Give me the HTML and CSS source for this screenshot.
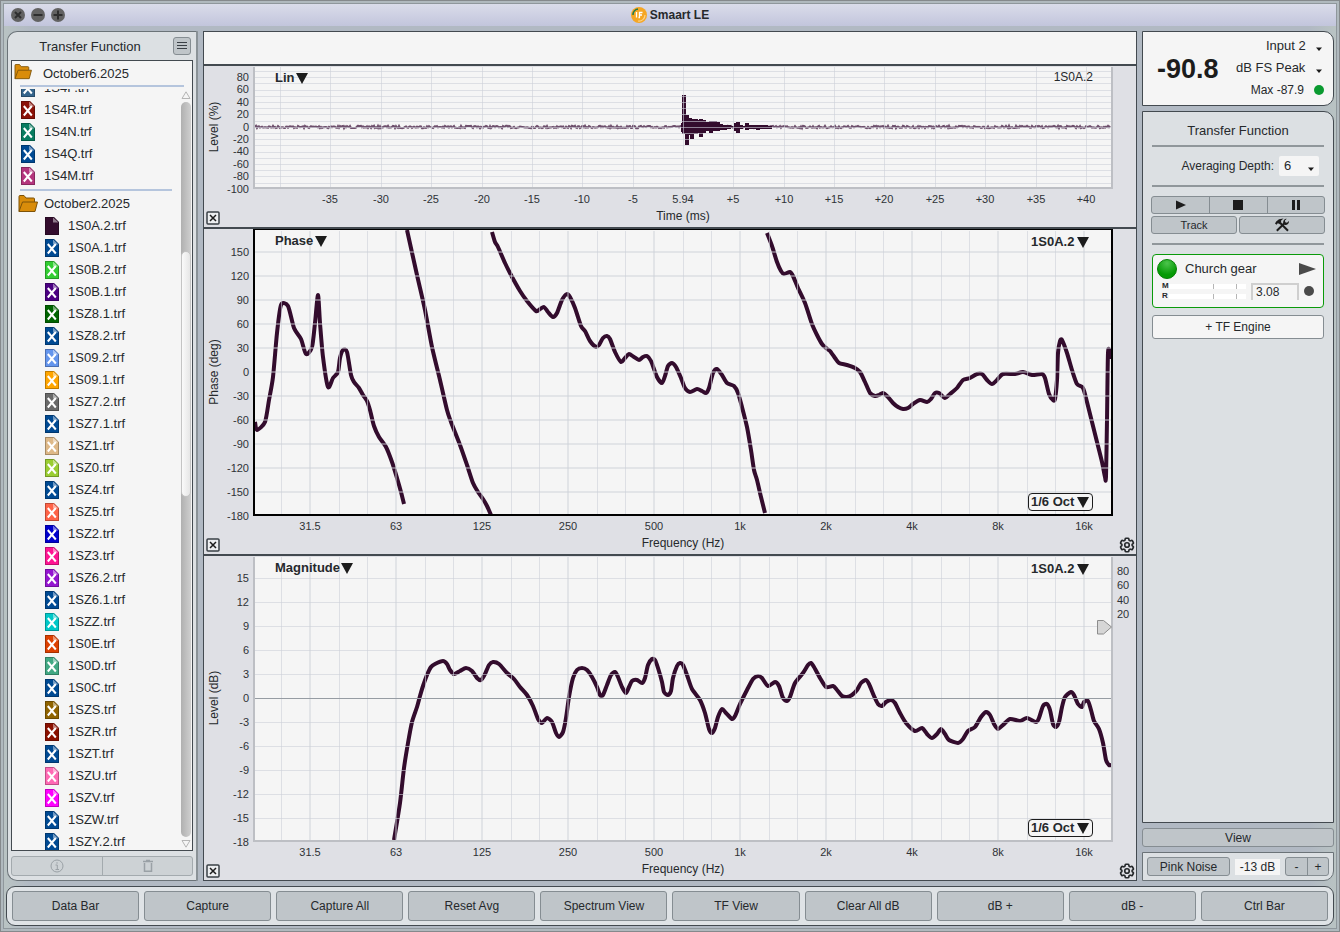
FILE: index.html
```html
<!DOCTYPE html>
<html lang="en">
<head>
    <meta charset="UTF-8">
    <meta name="viewport" content="width=device-width, initial-scale=1.0">
    <title>Smaart LE</title>
    <link rel="stylesheet" href="styles.css">
</head>
<body>
    <!-- shared icons -->
    <svg class="defs" aria-hidden="true">
        <symbol id="i-file" viewBox="0 0 14 18">
            <path d="M0 0h9l5 5v13H0z" fill="currentColor"/>
            <path d="M.5 .5h8.3l4.700 4.700v12.300H.5z" fill="none" stroke="#000" stroke-opacity=".25"/>
            <path d="M8 .5v5h5.500z" fill="#fff" fill-opacity=".45"/>
        </symbol>
        <symbol id="i-cross" viewBox="0 0 14 18">
            <path d="M2.800 5l8 9.500M10.800 5l-8 9.500" stroke="#fff" stroke-width="2"/>
        </symbol>
        <symbol id="i-folder" viewBox="0 0 20 18">
            <path d="M1 16.500V1.500q0-1 1-1h4l2 2.500h7.500q1 0 1 1V7" fill="#d98c0a" stroke="#7d5208"/>
            <path d="M1 16.500L4.500 7h15l-2.500 9.500z" fill="#d98c0a" stroke="#7d5208" stroke-linejoin="round"/>
        </symbol>
        <symbol id="i-down" viewBox="0 0 12 11">
            <path d="M0 0h12L6 11z" fill="#1c1c1c"/>
        </symbol>
        <symbol id="i-caret" viewBox="0 0 6 4">
            <path d="M0 0.500h6L3 4z" fill="#1c1c1c"/>
        </symbol>
        <symbol id="i-close" viewBox="0 0 14 14">
            <rect x="1" y="1" width="12" height="12" rx="1" fill="#eceef0" stroke="#3a4046" stroke-width="1.500"/>
            <path d="M4 4l6 6M10 4l-6 6" stroke="#1c1c1c" stroke-width="1.500"/>
        </symbol>
        <symbol id="i-gear" viewBox="0 0 24 24">
            <g fill="none" stroke="#26292c" stroke-width="2.200">
                <path d="M9.594 3.940c.09-.542.56-.94 1.110-.94h2.593c.55 0 1.020.398 1.110.94l.213 1.281c.063.374.313.686.645.87.074.04.147.083.22.127.325.196.72.257 1.075.124l1.217-.456a1.125 1.125 0 0 1 1.370.49l1.296 2.247a1.125 1.125 0 0 1-.26 1.431l-1.003.827c-.293.241-.438.613-.43.992a7.723 7.723 0 0 1 0 .255c-.008.378.137.75.43.991l1.004.827c.424.35.534.955.26 1.430l-1.298 2.247a1.125 1.125 0 0 1-1.369.491l-1.217-.456c-.355-.133-.75-.072-1.076.124a6.470 6.470 0 0 1-.22.128c-.331.183-.581.495-.644.869l-.213 1.281c-.09.543-.56.94-1.110.94h-2.594c-.55 0-1.019-.398-1.110-.94l-.213-1.281c-.062-.374-.312-.686-.644-.87a6.520 6.520 0 0 1-.22-.127c-.325-.196-.72-.257-1.076-.124l-1.217.456a1.125 1.125 0 0 1-1.369-.49l-1.297-2.247a1.125 1.125 0 0 1 .26-1.431l1.004-.827c.292-.24.437-.613.43-.991a6.932 6.932 0 0 1 0-.255c.007-.38-.138-.751-.43-.992l-1.004-.827a1.125 1.125 0 0 1-.26-1.430l1.297-2.247a1.125 1.125 0 0 1 1.370-.491l1.216.456c.356.133.751.072 1.076-.124.072-.044.146-.086.22-.128.332-.183.582-.495.644-.869l.214-1.280z"/>
                <circle cx="12" cy="12" r="3"/>
            </g>
        </symbol>
    </svg>

    <div class="window">
        <div class="frame">
            <header class="titlebar">
                <div class="lights">
                    <button aria-label="Close"><svg viewBox="0 0 14 14"><circle cx="7" cy="7" r="7" fill="#626262"/><path d="M4 4l6 6M10 4l-6 6" stroke="#2e2e2e" stroke-width="2"/></svg></button>
                    <button aria-label="Minimize"><svg viewBox="0 0 14 14"><circle cx="7" cy="7" r="7" fill="#626262"/><path d="M2.500 7h9" stroke="#2e2e2e" stroke-width="2"/></svg></button>
                    <button aria-label="Zoom"><svg viewBox="0 0 14 14"><circle cx="7" cy="7" r="7" fill="#626262"/><path d="M2.500 7h9M7 2.500v9" stroke="#2e2e2e" stroke-width="2"/></svg></button>
                </div>
                <h1>
                    <svg class="logo" viewBox="0 0 16 16">
                        <circle cx="8" cy="8" r="8" fill="#f5a623"/>
                        <path d="M2 8a6 6 0 0 1 5-6" fill="none" stroke="#1c7a50" stroke-width="1.500"/>
                        <path d="M14 8a6 6 0 0 1-7 6" fill="none" stroke="#fbd38a" stroke-width="1.200"/>
                        <path d="M5.500 5v5.500M7.500 10.500h1.500M8.500 10.500V5.500h3M8.500 8h2.500" fill="none" stroke="#fff" stroke-width="1.300"/>
                    </svg>
                    Smaart LE
                </h1>
            </header>

            <main class="body">
                <aside class="databar">
                    <div class="databar-head">
                        <h2>Transfer Function</h2>
                        <button class="menu" aria-label="Menu"><svg viewBox="0 0 18 18"><path d="M4 5.500h10M4 8.500h10M4 11.500h10" stroke="#3a4046" stroke-width="1.200"/></svg></button>
                    </div>
                    <div class="files">
                        <div class="session">
                            <svg class="folder"><use href="#i-folder"/></svg>October6.2025
                        </div>
                        <div class="pane">
                            <ul id="files"></ul>
                            <div class="scroll">
                                <svg viewBox="0 0 10 8"><path d="M1 7.500L5 .8l4 6.700z" fill="#f5f5f5" stroke="#b5b5b5"/></svg>
                                <div class="track"><span class="thumb"></span></div>
                                <svg viewBox="0 0 10 8"><path d="M1 .5h8L5 7.200z" fill="#f5f5f5" stroke="#b5b5b5"/></svg>
                            </div>
                        </div>
                    </div>
                    <div class="pair">
                        <button aria-label="Info"><svg viewBox="0 0 14 14" fill="none" stroke="#9aa1a6"><circle cx="7" cy="7" r="6"/><path d="M5.500 6h1.800v4.500M5.500 10.500h3.500M7 3.200v1.500"/></svg></button>
                        <button aria-label="Delete"><svg viewBox="0 0 14 14" fill="none" stroke="#9aa1a6" stroke-width="1.500"><path d="M3.500 4v8.200h7V4M2 2.500h10M5 1.500h4"/></svg></button>
                    </div>
                </aside>

                <section class="plots">
                    <div class="blank"></div>
                    <div class="chart chart-ir">
                        <svg class="plot" id="ir" viewBox="204 66 932 161"></svg>
                        <label class="pick pick-left"><select aria-label="Impulse scale"><option>Lin</option></select><svg><use href="#i-down"/></svg></label>
                        <button class="shut" aria-label="Close plot"><svg><use href="#i-close"/></svg></button>
                    </div>
                    <div class="chart chart-phase">
                        <svg class="plot" id="phase" viewBox="204 229 932 325"></svg>
                        <label class="pick pick-left"><select aria-label="Plot type"><option>Phase</option></select><svg><use href="#i-down"/></svg></label>
                        <label class="pick pick-right"><select aria-label="Trace"><option>1S0A.2</option></select><svg><use href="#i-down"/></svg></label>
                        <label class="pick pick-oct"><select aria-label="Smoothing"><option>1/6 Oct</option></select><svg><use href="#i-down"/></svg></label>
                        <button class="shut" aria-label="Close plot"><svg><use href="#i-close"/></svg></button>
                        <button class="gear" aria-label="Settings"><svg><use href="#i-gear"/></svg></button>
                    </div>
                    <div class="chart chart-mag">
                        <svg class="plot" id="mag" viewBox="204 556 932 324"></svg>
                        <label class="pick pick-left"><select aria-label="Plot type"><option>Magnitude</option></select><svg><use href="#i-down"/></svg></label>
                        <label class="pick pick-right"><select aria-label="Trace"><option>1S0A.2</option></select><svg><use href="#i-down"/></svg></label>
                        <label class="pick pick-oct"><select aria-label="Smoothing"><option>1/6 Oct</option></select><svg><use href="#i-down"/></svg></label>
                        <button class="shut" aria-label="Close plot"><svg><use href="#i-close"/></svg></button>
                        <button class="gear" aria-label="Settings"><svg><use href="#i-gear"/></svg></button>
                    </div>
                </section>

                <aside class="ctrlbar">
                    <div class="level">
                        <strong>-90.8</strong>
                        <div class="level-rows">
                            <label><select aria-label="Input"><option>Input 2</option></select><svg class="caret"><use href="#i-caret"/></svg></label>
                            <label><select aria-label="Meter"><option>dB FS Peak</option></select><svg class="caret"><use href="#i-caret"/></svg></label>
                            <p>Max -87.9<i class="dot"></i></p>
                        </div>
                    </div>

                    <div class="tf">
                        <h2>Transfer Function</h2>
                        <hr>
                        <div class="depth">
                            <label for="depth">Averaging Depth:</label>
                            <span class="depth-box"><select id="depth"><option>6</option></select><svg class="caret"><use href="#i-caret"/></svg></span>
                        </div>
                        <hr>
                        <div class="transport">
                            <button aria-label="Play"><svg viewBox="0 0 10 10"><path d="M0 0.500l10 4.500-10 4.500z"/></svg></button>
                            <button aria-label="Stop"><svg viewBox="0 0 10 10"><path d="M0 0h10v10H0z"/></svg></button>
                            <button aria-label="Pause"><svg viewBox="0 0 10 10"><path d="M1 0h3v10H1zM6 0h3v10H6z"/></svg></button>
                        </div>
                        <div class="tools">
                            <button class="btn">Track</button>
                            <button class="btn" aria-label="Tools"><svg viewBox="0 0 14 14">
                                <path d="M0 5.500l1.200-2L4 1.200 8.500.6 6 2.800l.2 1.400-2 2-1.200-1.200-1.500 1.700z"/>
                                <path d="M5 4.700l8 8M1.800 12.800L10 4.800" fill="none" stroke="#1c1c1c" stroke-width="2"/>
                                <path d="M11.800 .8a3.400 3.400 0 0 0-3.300 4.800l1.400 1.300a3.400 3.400 0 0 0 4-3.900l-1.900 1.700-1.700-.4-.4-1.700z"/>
                            </svg></button>
                        </div>
                        <hr>
                        <div class="engine">
                            <div class="engine-head">
                                <svg class="led" viewBox="0 0 20 20">
                                    <defs><radialGradient id="led" cx=".5" cy=".2" r=".6"><stop offset="0" stop-color="#4cc44c"/><stop offset="1" stop-color="#059a05"/></radialGradient></defs>
                                    <circle cx="10" cy="10" r="9.500" fill="url(#led)" stroke="#078007"/>
                                </svg>
                                <span>Church gear</span>
                                <button aria-label="Start"><svg viewBox="0 0 17 12"><path d="M0 0l17 6-17 6z" fill="#4a4a4a"/></svg></button>
                            </div>
                            <div class="engine-body">
                                <div class="meters">
                                    <b>M</b><span class="meter"><i></i><i></i></span>
                                    <b>R</b><span class="meter"><i></i><i></i></span>
                                </div>
                                <input type="text" value="3.08" aria-label="Delay (ms)">
                                <i class="rec"></i>
                            </div>
                        </div>
                        <button class="add">+ TF Engine</button>
                    </div>

                    <button class="btn view">View</button>

                    <div class="noise">
                        <button class="btn">Pink Noise</button>
                        <output>-13 dB</output>
                        <div class="step"><button>-</button><button>+</button></div>
                    </div>
                </aside>
            </main>

            <footer class="toolbar">
                <button class="btn">Data Bar</button>
                <button class="btn">Capture</button>
                <button class="btn">Capture All</button>
                <button class="btn">Reset Avg</button>
                <button class="btn">Spectrum View</button>
                <button class="btn">TF View</button>
                <button class="btn">Clear All dB</button>
                <button class="btn">dB +</button>
                <button class="btn">dB -</button>
                <button class="btn">Ctrl Bar</button>
            </footer>
        </div>
    </div>
    <script src="main.js"></script>
</body>
</html>
```

FILE: styles.css
```css
*{
    box-sizing: border-box;
    padding: 0;
    margin: 0;
}
body{
    font: 12px/16px "Liberation Sans", Arial, sans-serif;
    color: #26292c;
}
ul{
    list-style: none;
}
button, select, input{
    font: inherit;
    color: inherit;
    border: 0;
    background: none;
    appearance: none;
}
button{
    display: flex;
    align-items: center;
    justify-content: center;
}
h2{
    font-size: 13px;
    font-weight: normal;
    text-align: center;
}
svg{
    display: block;
    flex: none;
}
.defs{
    position: absolute;
    width: 0;
    height: 0;
}

/* window */
.window{
    height: 100vh;
    min-height: 700px;
    padding: 2px;
    border: 1px solid #85898c;
    background: #b0b9be;
}
.frame{
    display: flex;
    flex-direction: column;
    height: 100%;
    border: 1px solid #8f979c;
    background: linear-gradient(90deg, #b9c3c3, #b1b9c3 2%, #b1b9c3 98%, #b9c3c3);
}
.titlebar{
    display: grid;
    grid-template-columns: 1fr auto 1fr;
    align-items: center;
    height: 22px;
    padding: 0 7px;
    background: linear-gradient(#dadcea, #c2c5dc);
}
.lights{
    display: flex;
    gap: 6px;
}
.lights svg{
    width: 14px;
    height: 14px;
}
.titlebar h1{
    display: flex;
    align-items: center;
    gap: 3px;
    font-size: 12px;
}
.logo{
    width: 16px;
    height: 16px;
}
.body{
    flex: 1;
    min-height: 0;
    display: grid;
    grid-template-columns: 191px minmax(0, 1fr) 192px;
    grid-template-rows: minmax(0, 1fr);
    gap: 5px;
    padding: 5px 2px 5px 3px;
}

/* buttons */
.btn{
    border: 1px solid #858d92;
    border-radius: 3px;
    background: #bfc5c9;
}
.toolbar{
    display: grid;
    grid-template-columns: repeat(10, minmax(0, 1fr));
    gap: 5px;
    height: 40px;
    margin: 0 2px 2px;
    padding: 4px 5px;
    border: 1px solid #434a50;
    border-radius: 9px;
    background: #dfe3e6;
}

/* data bar */
.databar{
    display: flex;
    flex-direction: column;
    padding: 0 3px 4px;
    border: 1px solid #6b7378;
    border-right: 2px solid #8a9297;
    border-radius: 10px 0 0 10px;
    background: #dce0e3;
}
.databar-head{
    display: grid;
    grid-template-columns: 1fr 18px;
    align-items: center;
    height: 28px;
    padding-right: 2px;
}
.databar-head h2{
    padding: 2px 4px 0 0;
}
.menu{
    height: 18px;
    border: 1px solid #858d92;
    border-radius: 3px;
    background: #bfc5c9;
}
.menu svg{
    width: 18px;
    height: 18px;
}
.files{
    flex: 1;
    min-height: 0;
    display: flex;
    flex-direction: column;
    border: 1px solid #434a50;
    background: #f5f5f5;
    font-size: 13px;
}
.session{
    display: flex;
    align-items: center;
    gap: 11px;
    height: 26px;
    margin: 0 8px 2px;
    padding-top: 2px;
    border-bottom: 2px solid #b5c5dd;
}
.folder{
    width: 20px;
    height: 18px;
}
.session .folder{
    width: 18px;
    height: 16px;
    margin: 0 0 4px -6px;
}
.pane{
    flex: 1;
    min-height: 0;
    display: flex;
    overflow: hidden;
}
/* list is scrolled half a row */
#files{
    flex: 1;
    margin-top: -12px;
}
#files li{
    display: flex;
    align-items: center;
    gap: 9px;
    height: 22px;
    padding-left: 33px;
}
#files .top{
    padding-left: 9px;
}
#files .group{
    gap: 6px;
    padding-left: 6px;
}
#files .rule{
    height: 2px;
    margin: 2px 8px;
    background: #b5c5dd;
}
.file{
    width: 14px;
    height: 18px;
}
.scroll{
    display: flex;
    flex-direction: column;
    align-items: center;
    gap: 3px;
    width: 12px;
    padding: 2px 1px;
}
.scroll svg{
    width: 10px;
    height: 8px;
}
.track{
    flex: 1;
    display: grid;
    grid-template-rows: 149fr 246fr 340fr;
    width: 10px;
    border-radius: 5px;
    background: linear-gradient(90deg, #b0b0b0, #cfcfcf);
    overflow: hidden;
}
.thumb{
    grid-row: 2;
    border: 1px solid #c4c4c4;
    border-radius: 5px;
    background: linear-gradient(90deg, #fafafa, #e6e6e6);
}
.pair{
    display: grid;
    grid-template-columns: 1fr 1fr;
    height: 20px;
    margin-top: 5px;
    border: 1px solid #a3aaae;
    border-radius: 3px;
    background: #cdd2d5;
}
.pair button + button{
    border-left: 1px solid #a3aaae;
}
.pair svg{
    width: 14px;
    height: 14px;
}

/* plots */
.plots{
    display: flex;
    flex-direction: column;
    border: 1px solid #434a50;
    background: #dfe0e5;
}
.blank{
    flex: none;
    height: 34px;
    border-bottom: 2px solid #434a50;
    background: #f5f5f5;
}
.chart{
    position: relative;
    min-height: 0;
    border-bottom: 2px solid #434a50;
}
.chart-ir{
    flex: 161 1 0;
}
.chart-phase{
    flex: 325 1 0;
}
.chart-mag{
    flex: 324 1 0;
    border-bottom: 0;
}
.plot{
    width: 100%;
    height: 100%;
}
.paper{
    fill: #f5f5f5;
}
.edge{
    fill: none;
    stroke: #bdbfc4;
    stroke-width: 2;
}
#phase .edge{
    stroke: #000;
}
.grid{
    stroke: #cdd0d8;
    stroke-opacity: .6;
}
.grid-major{
    stroke-width: 2;
    stroke-opacity: .45;
}
.zero{
    stroke: #969ca3;
}
.trace{
    fill: none;
    stroke: #330c2d;
    stroke-width: 4;
    stroke-linejoin: round;
}
.burst{
    fill: #330c2d;
}
.hiss{
    fill: none;
    stroke: #6e4f6c;
    stroke-width: 2;
}
.tick{
    font-size: 11px;
    fill: #2e3236;
}
.name{
    font-size: 12px;
    fill: #26292c;
}
.end{
    text-anchor: end;
}
.mid{
    text-anchor: middle;
}
.pick{
    position: absolute;
    display: flex;
    align-items: center;
    gap: 1px;
    height: 16px;
    font-size: 13px;
    font-weight: bold;
}
.pick svg{
    width: 12px;
    height: 11px;
}
.pick-left{
    top: 4px;
    left: 71px;
}
.pick-right{
    top: 5px;
    right: 47px;
    gap: 2px;
}
.pick-oct{
    right: 43px;
    bottom: 43px;
    gap: 2px;
    height: 18px;
    padding: 0 3px 0 2px;
    border: 1px solid #1c1c1c;
    border-radius: 4px;
    background: #f5f5f5;
}
.shut{
    position: absolute;
    left: 2px;
    bottom: 2px;
}
.shut svg{
    width: 14px;
    height: 14px;
}
.gear{
    position: absolute;
    right: 0;
    bottom: 0;
}
.gear svg{
    width: 18px;
    height: 18px;
}

/* control bar */
.ctrlbar{
    display: flex;
    flex-direction: column;
    gap: 5px;
}
.level{
    display: flex;
    justify-content: space-between;
    height: 75px;
    padding: 3px 9px 0 14px;
    border: 1px solid #434a50;
    border-radius: 0 10px 10px 0;
    background: #f5f5f5;
}
.level strong{
    padding-top: 18px;
    font-size: 27px;
    line-height: 32px;
    color: #1c1c1c;
}
.level-rows label, .level-rows p{
    display: flex;
    align-items: center;
    justify-content: flex-end;
    height: 22px;
}
.level-rows label{
    gap: 10px;
    padding-right: 2px;
    font-size: 13px;
}
.level-rows p{
    gap: 10px;
}
.caret{
    width: 6px;
    height: 4px;
    margin-top: 5px;
}
.dot, .rec{
    width: 10px;
    height: 10px;
    border-radius: 50%;
    background: #0a9a30;
}
.tf{
    flex: 1;
    min-height: 0;
    padding: 5px 9px;
    border: 1px solid #434a50;
    border-radius: 0 10px 0 0;
    background: #dce0e3;
}
.tf h2{
    height: 28px;
    line-height: 28px;
}
.tf hr{
    border: 0;
    border-top: 2px solid #90979b;
}
.depth{
    display: flex;
    align-items: center;
    justify-content: flex-end;
    gap: 5px;
    height: 38px;
    padding-right: 5px;
}
.depth-box{
    display: flex;
    align-items: center;
    justify-content: space-between;
    width: 40px;
    height: 20px;
    padding: 0 5px;
    border-radius: 2px;
    background: #f5f5f5;
    font-size: 13px;
}
.transport{
    display: grid;
    grid-template-columns: repeat(3, 1fr);
    height: 18px;
    margin: 9px -1px 2px;
    border: 1px solid #858d92;
    border-radius: 3px;
    background: #bfc5c9;
}
.transport button + button{
    border-left: 1px solid #858d92;
}
.transport svg{
    width: 10px;
    height: 10px;
    fill: #1c1c1c;
}
.tools{
    display: grid;
    grid-template-columns: 1fr 1fr;
    gap: 2px;
    height: 18px;
    margin: 0 -1px 9px;
    font-size: 11px;
}
.tools svg{
    width: 14px;
    height: 14px;
    fill: #1c1c1c;
}
.engine{
    height: 54px;
    margin: 9px 0 7px;
    padding: 3px 7px 0 4px;
    border: 1px solid #0a9a0a;
    border-radius: 4px;
    background: #f5f5f5;
}
.engine-head{
    display: flex;
    align-items: center;
    gap: 8px;
    height: 22px;
    font-size: 13px;
}
.engine-head span{
    flex: 1;
}
.led{
    width: 20px;
    height: 20px;
}
.engine-head button svg{
    width: 17px;
    height: 12px;
}
.engine-body{
    display: flex;
    align-items: center;
    gap: 5px;
    height: 22px;
    padding-right: 2px;
}
.meters{
    flex: 1;
    display: grid;
    grid-template-columns: 7px 1fr;
    align-items: center;
    padding-left: 5px;
    font-size: 8px;
    line-height: 10px;
}
.meter{
    display: grid;
    grid-template-columns: 46fr 23fr 9fr;
    height: 5px;
    background: #fff;
}
.meter i{
    border-right: 1px solid #b5b5b5;
}
.engine-body input{
    width: 48px;
    height: 17px;
    padding-left: 3px;
    border: 2px solid #cfcfcf;
    border-bottom: 0;
    background: #f5f5f5;
}
.rec{
    background: #4a4a4a;
}
.add{
    width: 100%;
    height: 24px;
    border: 1px solid #858d92;
    border-radius: 3px;
    background: #f5f5f5;
}
.view{
    height: 19px;
}
.noise{
    display: flex;
    align-items: center;
    justify-content: space-between;
    height: 29px;
    padding: 0 4px;
    border: 1px solid #6b7378;
    border-radius: 0 0 10px 0;
    background: #dce0e3;
}
.noise .btn{
    width: 83px;
    height: 19px;
}
.noise output{
    padding: 0 5px;
    background: #f5f5f5;
}
.step{
    display: grid;
    grid-template-columns: 1fr 1fr;
    width: 44px;
    height: 19px;
    border: 1px solid #858d92;
    border-radius: 3px;
    background: #bfc5c9;
}
.step button + button{
    border-left: 1px solid #858d92;
}
```

FILE: main.js
```js
var blue = '#004a93';

// saved traces, in list order
var files = [
    ['1S4P', '#34648c'], ['1S4R', '#8b1208'], ['1S4N', '#087c60'], ['1S4Q', blue], ['1S4M', '#b4357d'],
    ['1S0A.2', '#330c2d'], ['1S0A.1', blue], ['1S0B.2', '#32cd32'], ['1S0B.1', '#4b0082'],
    ['1SZ8.1', '#006400'], ['1SZ8.2', blue], ['1S09.2', '#6495ed'], ['1S09.1', '#ffa500'],
    ['1SZ7.2', '#696969'], ['1SZ7.1', blue], ['1SZ1', '#deb887'], ['1SZ0', '#9acd32'],
    ['1SZ4', blue], ['1SZ5', '#ff6347'], ['1SZ2', '#0000cd'], ['1SZ3', '#ff1493'],
    ['1SZ6.2', '#9415d0'], ['1SZ6.1', blue], ['1SZZ', '#00c8c8'], ['1S0E', '#dd4000'],
    ['1S0D', '#41a883'], ['1S0C', blue], ['1SZS', '#8f6300'], ['1SZR', '#8b1000'],
    ['1SZT', blue], ['1SZU', '#ff69b4'], ['1SZV', '#ff00ff'], ['1SZW', blue], ['1SZY.2', blue]
];

var html = '';
files.forEach(function (f, i) {
    if (i === 5) {
        html += '<li class="rule"></li>';
        html += '<li class="group"><svg class="folder"><use href="#i-folder"/></svg>October2.2025</li>';
    }
    html += '<li' + (i < 5 ? ' class="top"' : '') + '>';
    html += '<svg class="file" style="color:' + f[1] + '"><use href="#i-file"/>';
    html += (i === 5 ? '' : '<use href="#i-cross"/>') + '</svg>' + f[0] + '.trf</li>';
});
document.getElementById('files').innerHTML = html;

function text(x, y, cls, str) {
    return '<text x="' + x + '" y="' + y + '" class="' + cls + '">' + str + '</text>';
}
function vline(x, y1, y2, cls) {
    return '<path class="' + cls + '" d="M' + x + ' ' + y1 + 'V' + y2 + '"/>';
}
function hline(y, cls) {
    return '<path class="' + cls + '" d="M255 ' + y + 'H1111"/>';
}
function side(y, str) {
    return '<text class="name mid" transform="translate(218 ' + y + ') rotate(-90)">' + str + '</text>';
}

// smooth curve through a flat list of x, y
function curve(p) {
    var n = p.length / 2;
    var at = function (i) {
        i = Math.max(0, Math.min(n - 1, i));
        return [p[i * 2], p[i * 2 + 1]];
    };
    var d = 'M' + at(0);
    for (var i = 0; i < n - 1; i++) {
        var a = at(i - 1), b = at(i), c = at(i + 1), e = at(i + 2);
        d += 'C' + [b[0] + (c[0] - a[0]) / 8, b[1] + (c[1] - a[1]) / 8,
            c[0] - (e[0] - b[0]) / 8, c[1] - (e[1] - b[1]) / 8, c[0], c[1]];
    }
    return '<path class="trace" d="' + d + '"/>';
}

// frequency axis: third octave lines, octave labels
function freqGrid(top, bottom) {
    var s = '';
    for (var i = -1; i < 28; i++) {
        var major = i % 3 === 0;
        var x = Math.round(310 + i * 28.667) + (major ? 0 : 0.5);
        s += vline(x, top, bottom, major ? 'grid grid-major' : 'grid');
    }
    return s;
}
function freqLabels(y) {
    return ['31.5', '63', '125', '250', '500', '1k', '2k', '4k', '8k', '16k'].map(function (t, i) {
        return text(310 + i * 86, y, 'tick mid', t);
    }).join('') + text(683, y + 17, 'name mid', 'Frequency (Hz)');
}

// impulse response
var i, s = '<rect class="paper" x="254" y="67" width="858" height="121"/>';
var seed = 7, d = 'M255 127';
for (i = 256; i < 1111; i += 1) {
    seed = (seed * 16807) % 2147483647;
    d += 'L' + i + ' ' + (127 + (seed / 2147483647 - 0.5) * 2.4).toFixed(1);
}
s += '<path class="hiss" d="' + d + '"/>';
var burst = [
    681, 123, 132, 682, 95, 134, 685, 115, 145, 688, 118, 135, 690, 119, 139, 694, 119, 134, 697, 120, 133,
    699, 119, 137, 702, 120, 133, 706, 122, 131, 709, 121, 133, 713, 121, 131, 716, 122, 131, 719, 124, 130,
    723, 125, 130, 727, 125, 129, 731, 126, 128, 734, 123, 131, 736, 122, 133, 739, 125, 129, 743, 126, 128,
    745, 123, 130, 748, 125, 129, 752, 125, 129, 756, 125, 130, 760, 125, 129, 764, 125, 129, 768, 126, 129
];
for (i = 0; i < burst.length; i += 3) {
    s += '<rect class="burst" x="' + burst[i] + '" y="' + burst[i + 1] + '" width="4" height="' + (burst[i + 2] - burst[i + 1]) + '"/>';
}
for (i = 0; i < 19; i++) {
    s += hline(Math.round(71 + i * 6.2) + 0.5, 'grid');
}
for (i = -8; i <= 8; i++) {
    s += vline(Math.round(683 + i * 50.36) + 0.5, 67, 188, 'grid');
}
s += '<path class="edge" d="M254 67V188H1112V67"/>';
for (i = 0; i < 10; i++) {
    s += text(249, Math.round(81 + i * 12.4), 'tick end', 80 - i * 20);
}
for (i = -7; i <= 8; i++) {
    s += text(Math.round(683 + i * 50.36), 203, 'tick mid', i === 0 ? '5.94' : (i > 0 ? '+' : '') + i * 5);
}
s += text(683, 220, 'name mid', 'Time (ms)') + text(1093, 81, 'name end', '1S0A.2') + side(127, 'Level (%)');
document.getElementById('ir').innerHTML = s;

// phase
var phase = [
    [255, 422, 257, 430, 265, 422, 269, 400, 273, 377, 277, 333, 281, 305, 288, 306, 294, 328, 301, 339, 306, 354,
        312, 347, 315, 323, 318, 295, 320, 323, 323, 357, 328, 387, 333, 378, 338, 372, 340, 358, 343, 350, 347, 352,
        351, 375, 354, 382, 359, 388, 363, 395, 367, 401, 370, 410, 374, 426, 379, 437, 386, 447, 392, 462, 397, 478,
        401, 492, 404, 504],
    [407, 230, 417, 275, 425, 310, 432, 347, 440, 380, 447, 410, 451, 422, 460, 445, 467, 465, 473, 483, 478, 492,
        483, 499, 487, 506, 491, 515],
    [492, 232, 495, 242, 498, 247, 505, 263, 511, 275, 520, 291, 527, 301, 536, 311, 540, 309, 544, 307, 548, 312,
        553, 317, 557, 313, 562, 300, 567, 294, 570, 297, 575, 308, 581, 326, 585, 331, 590, 341, 596, 347, 599, 345,
        603, 338, 607, 336, 610, 339, 615, 352, 621, 362, 625, 358, 629, 354, 634, 357, 639, 360, 643, 357, 647, 356,
        651, 361, 657, 377, 662, 383, 665, 376, 668, 366, 672, 363, 676, 367, 681, 378, 685, 388, 690, 392, 697, 389,
        702, 391, 706, 393, 709, 388, 713, 373, 717, 369, 722, 375, 727, 383, 734, 386, 738, 393, 742, 407, 747, 427,
        751, 450, 754, 470, 757, 480, 761, 497, 765, 513],
    [767, 233, 772, 246, 777, 262, 781, 271, 784, 274, 790, 272, 793, 276, 798, 288, 805, 303, 812, 324, 817, 335,
        822, 344, 826, 348, 830, 351, 835, 358, 839, 363, 847, 365, 855, 368, 860, 372, 865, 382, 870, 393, 875, 396,
        879, 395, 883, 393, 888, 397, 893, 403, 898, 407, 903, 409, 908, 408, 913, 404, 920, 400, 927, 402, 931, 399,
        935, 393, 939, 393, 945, 398, 950, 394, 957, 388, 963, 380, 970, 378, 977, 374, 982, 374, 987, 380, 992, 384,
        997, 380, 1003, 374, 1015, 374, 1023, 372, 1032, 375, 1042, 374, 1045, 378, 1049, 394, 1053, 400, 1055, 399,
        1057, 380, 1058, 353, 1060, 341, 1062, 340, 1067, 353, 1072, 370, 1077, 384, 1083, 388, 1087, 402, 1092, 422,
        1097, 442, 1102, 462, 1105, 477, 1106, 477, 1107, 420, 1108, 353, 1110, 352, 1111, 359]
];
s = '<rect class="paper" x="254" y="229" width="858" height="286"/>';
s += phase.map(curve).join('') + freqGrid(231, 514);
for (i = 0; i < 11; i++) {
    s += hline(252 + i * 24, 'grid grid-major');
}
s += '<path class="edge" d="M254 229H1112V515H254z"/>';
for (i = 0; i < 12; i++) {
    s += text(249, 256 + i * 24, 'tick end', 150 - i * 30);
}
s += freqLabels(530) + side(372, 'Phase (deg)');
document.getElementById('phase').innerHTML = s;

// magnitude
var mag = [
    394, 840, 400, 803, 404, 768, 408, 743, 412, 722, 417, 707, 420, 696, 423, 686, 427, 675, 431, 667, 435, 664,
    443, 661, 447, 664, 450, 670, 454, 674, 460, 671, 466, 668, 472, 671, 477, 678, 481, 680, 485, 674, 489, 665,
    493, 662, 499, 664, 507, 673, 514, 679, 520, 687, 527, 695, 533, 706, 538, 719, 542, 723, 547, 718, 552, 722,
    556, 733, 559, 737, 563, 732, 566, 718, 569, 697, 573, 678, 577, 670, 582, 668, 587, 670, 592, 677, 597, 687,
    600, 695, 603, 695, 607, 685, 611, 675, 615, 672, 618, 677, 622, 687, 626, 693, 629, 687, 632, 681, 637, 680,
    642, 683, 645, 678, 648, 665, 652, 659, 655, 660, 658, 668, 662, 682, 664, 692, 668, 695, 671, 691, 673, 678,
    677, 666, 680, 663, 683, 665, 687, 675, 692, 689, 700, 700, 705, 713, 709, 729, 712, 733, 715, 728, 718, 717,
    722, 709, 726, 713, 732, 719, 735, 716, 740, 704, 747, 690, 753, 679, 758, 676, 762, 678, 768, 686, 775, 682,
    779, 686, 783, 698, 787, 701, 790, 697, 795, 683, 803, 673, 808, 665, 811, 663, 814, 667, 820, 678, 826, 687,
    833, 686, 837, 690, 842, 696, 847, 697, 852, 695, 857, 690, 861, 683, 866, 680, 869, 684, 874, 696, 878, 704,
    882, 706, 886, 702, 891, 700, 895, 703, 900, 713, 906, 723, 915, 731, 922, 728, 927, 734, 932, 738, 937, 734,
    941, 729, 945, 734, 949, 740, 958, 743, 963, 739, 968, 731, 975, 727, 981, 717, 986, 712, 990, 715, 994, 724,
    998, 729, 1003, 725, 1010, 719, 1020, 721, 1027, 718, 1036, 722, 1039, 718, 1043, 706, 1047, 704, 1050, 710,
    1053, 724, 1056, 727, 1059, 722, 1062, 707, 1065, 697, 1071, 692, 1074, 695, 1078, 704, 1082, 707, 1084, 702,
    1088, 701, 1091, 710, 1094, 721, 1099, 729, 1103, 743, 1106, 760, 1109, 765, 1111, 765
];
s = '<rect class="paper" x="254" y="557" width="858" height="284"/>';
s += curve(mag) + freqGrid(557, 840);
for (i = 0; i < 11; i++) {
    s += hline(578.5 + i * 24, i === 5 ? 'zero' : 'grid');
}
s += '<path class="edge" d="M254 557V841H1112V557"/>';
for (i = 0; i < 12; i++) {
    s += text(249, 582 + i * 24, 'tick end', 15 - i * 3);
}
['80', '60', '40', '20'].forEach(function (t, n) {
    s += text(1117, Math.round(575 + n * 14.4), 'tick', t);
});
s += '<path d="M1097.500 620.500h6l8 6.500-8 7h-6z" fill="#d6d6d6" stroke="#8c8c8c"/>';
s += freqLabels(856) + side(698, 'Level (dB)');
document.getElementById('mag').innerHTML = s;
```
